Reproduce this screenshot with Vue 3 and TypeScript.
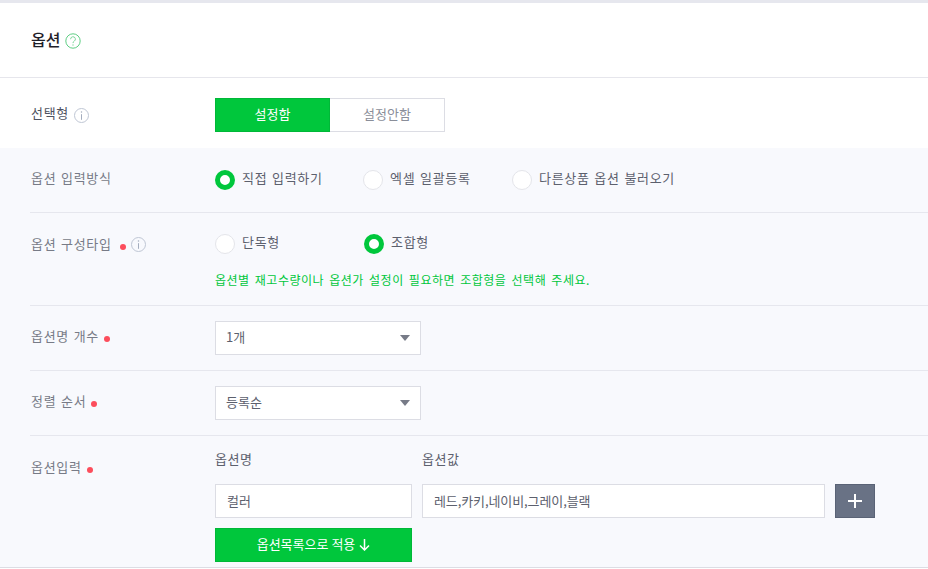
<script setup lang="ts">
const methods = [
  { label: '직접 입력하기', on: true, width: 148 },
  { label: '엑셀 일괄등록', on: false, width: 149 },
  { label: '다른상품 옵션 불러오기', on: false, width: 200 },
]
const types = [
  { label: '단독형', on: false, width: 149 },
  { label: '조합형', on: true, width: 100 },
]
</script>

<template>
  <div class="page">
    <header class="head">
      <h2 class="title">옵션</h2>
      <svg class="help" width="16" height="16" viewBox="0 0 16 16">
        <circle cx="8" cy="8" r="7.2" fill="none" stroke="#5fce84" stroke-width="1" />
        <path d="M5.6 6.2a2.4 2.4 0 1 1 3.6 2c-.8.5-1.2.9-1.2 1.9" fill="none" stroke="#7fd79c" stroke-width="1" />
        <circle cx="8" cy="12" r=".7" fill="#7fd79c" />
      </svg>
    </header>

    <section class="choice">
      <div class="label">
        <span class="txt">선택형</span>
        <svg class="info" width="15" height="15" viewBox="0 0 15 15">
          <circle cx="7.5" cy="7.5" r="7" fill="none" stroke="#bfc6d4" />
          <path d="M7.5 6.2v5.6" stroke="#a4adbe" />
          <circle cx="7.5" cy="3.9" r=".75" fill="#a4adbe" />
        </svg>
      </div>
      <div class="toggle">
        <button class="seg seg-on"><span class="txt">설정함</span></button>
        <button class="seg"><span class="txt">설정안함</span></button>
      </div>
    </section>

    <section class="panel">
      <div class="row row-method">
        <div class="label"><span class="txt">옵션 입력방식</span></div>
        <div class="radios">
          <div v-for="m in methods" :key="m.label" class="radio-item" :style="{ width: m.width + 'px' }">
            <span class="radio" :class="{ 'radio-on': m.on }"></span>
            <span class="txt">{{ m.label }}</span>
          </div>
        </div>
      </div>

      <div class="row row-type">
        <div class="label">
          <span class="txt">옵션 구성타입</span>
          <i class="dot dot-wide"></i>
          <svg class="info info-raised" width="15" height="15" viewBox="0 0 15 15">
            <circle cx="7.5" cy="7.5" r="7" fill="none" stroke="#bfc6d4" />
            <path d="M7.5 6.2v5.6" stroke="#a4adbe" />
            <circle cx="7.5" cy="3.9" r=".75" fill="#a4adbe" />
          </svg>
        </div>
        <div>
          <div class="radios">
            <div v-for="t in types" :key="t.label" class="radio-item" :style="{ width: t.width + 'px' }">
              <span class="radio" :class="{ 'radio-on': t.on }"></span>
              <span class="txt">{{ t.label }}</span>
            </div>
          </div>
          <p class="hint">옵션별 재고수량이나 옵션가 설정이 필요하면 조합형을 선택해 주세요.</p>
        </div>
      </div>

      <div class="row row-select">
        <div class="label"><span class="txt">옵션명 개수</span><i class="dot"></i></div>
        <div class="select"><span class="txt">1개</span><i class="caret"></i></div>
      </div>

      <div class="row row-select">
        <div class="label"><span class="txt">정렬 순서</span><i class="dot"></i></div>
        <div class="select"><span class="txt">등록순</span><i class="caret"></i></div>
      </div>

      <div class="row row-input">
        <div class="label label-input"><span class="txt">옵션입력</span><i class="dot"></i></div>
        <div class="grid">
          <div class="col-title"><span class="txt">옵션명</span></div>
          <div class="col-title"><span class="txt">옵션값</span></div>
          <div></div>
          <div class="field"><span class="txt">컬러</span></div>
          <div class="field field-list"><span class="txt">레드,카키,네이비,그레이,블랙</span></div>
          <button class="plus" aria-label="추가">
            <svg width="14" height="14" viewBox="0 0 14 14">
              <path d="M7 0v14M0 7h14" stroke="#fff" stroke-width="2" />
            </svg>
          </button>
          <button class="apply">
            <span class="txt">옵션목록으로 적용</span>
            <svg width="11" height="12" viewBox="0 0 11 12">
              <path d="M5.5 0v11M1 6.5l4.5 4.5L10 6.5" fill="none" stroke="#fff" stroke-width="1.5" />
            </svg>
          </button>
        </div>
      </div>
    </section>
  </div>
</template>

<style>
html, body { margin: 0; background: #fff; overflow: hidden; }
</style>

<style scoped>
.page {
  width: 928px;
  height: 569px;
  overflow: hidden;
  font-family: "Noto Sans CJK KR", "Noto Sans", sans-serif;
  font-size: 13px;
  color: #666b78;
  background: #fff;
  border-top: 3px solid #e6e7ee;
  box-sizing: border-box;
}
.txt { display: block; padding-bottom: 4px; }
.head {
  height: 75px;
  box-sizing: border-box;
  border-bottom: 1px solid #e6e6ec;
  padding: 0 31px;
  display: flex;
  align-items: center;
  gap: 5px;
}
.title { margin: 0 0 2px; font-size: 16px; font-weight: 500; color: #1e2028; line-height: 20px; }
.help { margin-top: 1px; }
.choice {
  height: 70px;
  box-sizing: border-box;
  display: flex;
  align-items: flex-start;
  padding: 20px 0 0 31px;
}
.label {
  width: 184px;
  flex: none;
  display: flex;
  align-items: center;
  line-height: 20px;
  letter-spacing: .7px;
  word-spacing: 1.1px;
}
.choice .label { color: #4e5260; height: 34px; }
.info { margin-left: 5px; }
.info-raised { margin-bottom: 3px; }
.toggle { display: flex; }
.seg {
  width: 115px;
  height: 34px;
  margin: 0;
  padding: 0;
  font: inherit;
  color: #8a8e99;
  background: #fff;
  border: 1px solid #dcdde4;
  border-left: 0;
}
.seg-on {
  color: #fff;
  background: #00c73c;
  border: 1px solid #00b838;
}
.panel {
  height: 420px;
  padding-left: 30px;
  background: #f8f9fd;
  border-bottom: 1px solid #dcdde4;
  box-sizing: border-box;
}
.row { display: flex; border-bottom: 1px solid #e6e7ee; box-sizing: border-box; }
.row .label { width: 185px; padding-left: 1px; box-sizing: border-box; color: #777b87; }
.row-method { height: 65px; align-items: center; }
.row-type { height: 93px; padding-top: 21px; align-items: flex-start; }
.row-select { height: 65px; align-items: center; }
.row-input { border-bottom: 0; padding-top: 13px; align-items: flex-start; }
.radios { display: flex; align-items: center; height: 20px; }
.radio-item {
  display: flex;
  align-items: center;
  gap: 7px;
  color: #5c606d;
  line-height: 20px;
  flex: none;
  letter-spacing: .7px;
  word-spacing: 1.1px;
}
.radio {
  width: 20px;
  height: 20px;
  box-sizing: border-box;
  border: 1px solid #e4e5ea;
  border-radius: 50%;
  background: #fff;
  flex: none;
}
.radio-on { border: 5px solid #00c73c; }
.hint {
  margin: 17px 0 0;
  font-size: 12px;
  line-height: 18px;
  color: #00c73c;
  letter-spacing: .5px;
  word-spacing: 2px;
}
.dot {
  width: 6px;
  height: 6px;
  border-radius: 50%;
  background: #fc4d5c;
  margin: 2px 0 0 5px;
  flex: none;
}
.dot-wide { margin-left: 8px; }
.select {
  width: 206px;
  height: 34px;
  box-sizing: border-box;
  background: #fff;
  border: 1px solid #dcdde4;
  padding: 0 10px;
  display: flex;
  align-items: center;
  justify-content: space-between;
  color: #5c606d;
}
.caret {
  width: 0;
  height: 0;
  border-left: 5px solid transparent;
  border-right: 5px solid transparent;
  border-top: 6px solid #777b87;
}
.label-input { margin-top: 8px; }
.grid {
  display: grid;
  grid-template-columns: 197px 403px 40px;
  column-gap: 10px;
  grid-template-rows: 35px 34px 34px;
  align-items: start;
}
.col-title { color: #5c606d; line-height: 20px; letter-spacing: .5px; }
.field {
  height: 34px;
  box-sizing: border-box;
  background: #fff;
  border: 1px solid #dcdde4;
  padding: 2px 11px 0;
  line-height: 28px;
  color: #5c606d;
}
.field-list { letter-spacing: -.1px; }
.plus {
  width: 40px;
  height: 34px;
  margin: 0;
  padding: 0;
  background: #697285;
  border: 1px solid #5a6376;
  display: flex;
  align-items: center;
  justify-content: center;
}
.apply {
  grid-column: 1;
  width: 197px;
  height: 34px;
  margin: 10px 0 0;
  padding: 0;
  font: inherit;
  color: #fff;
  background: #00c73c;
  border: 1px solid #00b838;
  display: flex;
  align-items: center;
  justify-content: center;
  gap: 4px;
}
</style>
